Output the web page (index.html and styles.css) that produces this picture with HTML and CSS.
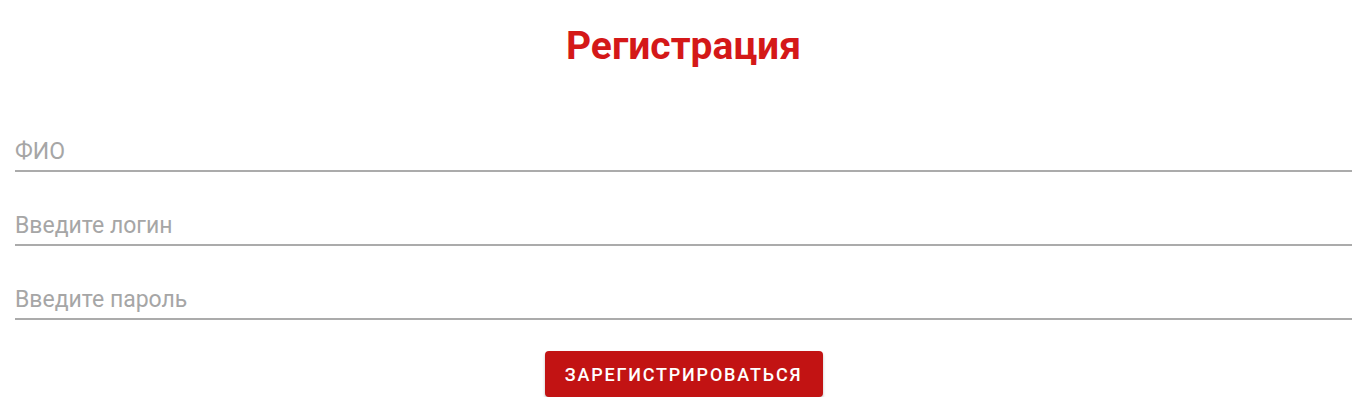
FILE: index.html
```html
<!DOCTYPE html>
<html lang="ru">
<head>
<meta charset="utf-8">
<title>Регистрация</title>
<link rel="stylesheet" href="styles.css">
</head>
<body>
<main class="page">
  <h1 class="title">Регистрация</h1>
  <form class="form">
    <label class="field"><input class="input" type="text" placeholder="ФИО"></label>
    <label class="field"><input class="input" type="text" placeholder="Введите логин"></label>
    <label class="field"><input class="input" type="password" placeholder="Введите пароль"></label>
    <div class="actions"><button class="btn" type="button">Зарегистрироваться</button></div>
  </form>
</main>
</body>
</html>
```
FILE: styles.css
```css
* { box-sizing: border-box; }
html, body { margin: 0; background: #fff; }
body { font-family: Roboto, "Noto Sans", sans-serif; }
.page { padding: 23px 15px 0 15px; display: flex; flex-direction: column; }
.title {
  margin: 0;
  text-align: center;
  font-size: 39px;
  line-height: 46px;
  font-weight: 700;
  color: #d41818;
}
.form { display: flex; flex-direction: column; }
.field { display: block; padding-top: 37px; }
.field:first-child { padding-top: 66px; }
.input {
  display: block;
  width: 100%;
  border: 0;
  border-bottom: 2px solid #ababab;
  padding: 2px 0 5px 0;
  margin: 0;
  font-family: Roboto, sans-serif;
  font-size: 23px;
  line-height: 28px;
  height: 37px;
  color: #333;
  background: transparent;
  outline: none;
}
.input::placeholder { color: #a6a6a6; }
.actions { display: flex; justify-content: center; padding-top: 31px; }
.btn {
  width: 278px;
  height: 46px;
  border: 0;
  border-radius: 4px;
  background: #c21313;
  color: #fff;
  font-family: Roboto, sans-serif;
  font-weight: 500;
  font-size: 18px;
  letter-spacing: 1.8px;
  text-transform: uppercase;
  box-shadow: 0 2px 3px rgba(0,0,0,0.25);
  cursor: pointer;
}
```
